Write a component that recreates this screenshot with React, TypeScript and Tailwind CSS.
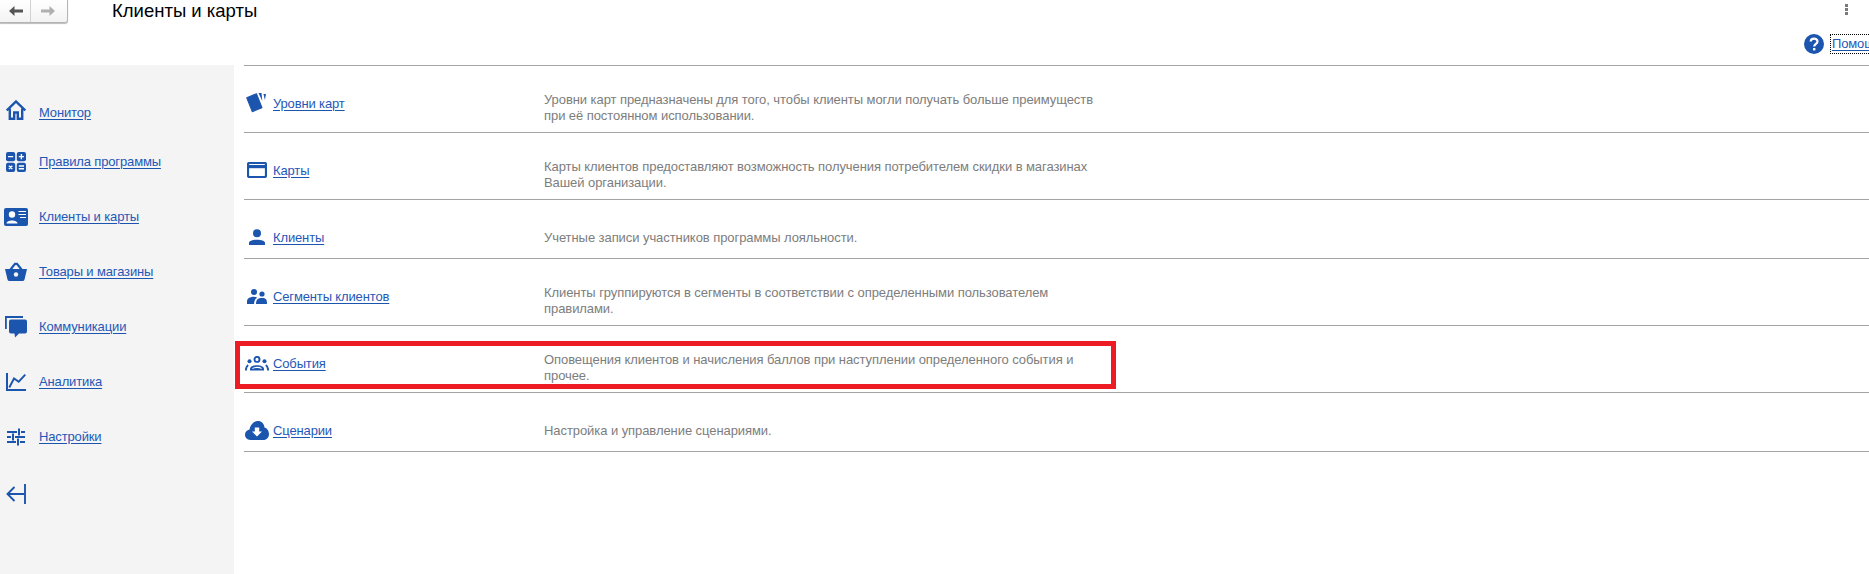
import React from "react";

const BLUE = "#1c55ae";

function Svg({ w, h, children }: { w: number; h: number; children: React.ReactNode }) {
  return (
    <svg width={w} height={h} viewBox={`0 0 ${w} ${h}`} fill="none" className="block shrink-0">
      {children}
    </svg>
  );
}

const IconHome = () => (
  <Svg w={20} h={20}>
    <path d="M0.8 10.5 L10 1.5 L19.2 10.5" stroke={BLUE} strokeWidth="2.4" />
    <path d="M3.8 8.5 V18.8 H8.2 V12.5 H11.8 V18.8 H16.2 V8.5" stroke={BLUE} strokeWidth="2.4" />
  </Svg>
);
const IconCalc = () => (
  <Svg w={20} h={20}>
    <rect x="0" y="0" width="9.2" height="9.2" rx="2" fill={BLUE} />
    <rect x="10.8" y="0" width="9.2" height="9.2" rx="2" fill={BLUE} />
    <rect x="0" y="10.8" width="9.2" height="9.2" rx="2" fill={BLUE} />
    <rect x="10.8" y="10.8" width="9.2" height="9.2" rx="2" fill={BLUE} />
    <path d="M2 4.6 H7.2 M12.8 4.6 H18 M15.4 2 V7.2 M2.9 13.7 L6.3 17.1 M6.3 13.7 L2.9 17.1 M12.8 14 H18 M12.8 16.8 H18" stroke="#fff" strokeWidth="1.4" />
  </Svg>
);
const IconContact = () => (
  <Svg w={24} h={18}>
    <rect width="24" height="18" rx="2" fill={BLUE} />
    <circle cx="8" cy="6.5" r="3.2" fill="#fff" />
    <path d="M2.5 15.5 C2.5 11.5 13.5 11.5 13.5 15.5 Z" fill="#fff" />
    <path d="M14.5 3.5 H22 M14.5 6.5 H22 M16 9.5 H22" stroke="#fff" strokeWidth="1.2" />
  </Svg>
);
const IconBasket = () => (
  <Svg w={22} h={19}>
    <path d="M5.5 7.5 L10 1.8 H12 L16.5 7.5" stroke={BLUE} strokeWidth="2.2" />
    <path d="M0 7 H22 L19.5 17.5 Q19.2 19 17.5 19 H4.5 Q2.8 19 2.5 17.5 Z" fill={BLUE} />
    <circle cx="11" cy="12.5" r="2.2" fill="#f4f4f4" />
  </Svg>
);
const IconComm = () => (
  <Svg w={22} h={22}>
    <path d="M.9 13 V1 H18" stroke={BLUE} strokeWidth="1.8" />
    <path d="M6 3.5 H20 Q22 3.5 22 5.5 V15.5 Q22 17.5 20 17.5 H14 L10 21.5 L9.5 17.5 H6 Q4 17.5 4 15.5 V5.5 Q4 3.5 6 3.5 Z" fill={BLUE} />
  </Svg>
);
const IconChart = () => (
  <Svg w={20} h={18}>
    <path d="M1 0 V17 H20" stroke={BLUE} strokeWidth="2" />
    <path d="M3.3 14.5 L8 5.5 L12.7 8.7 L19.3 1.7" stroke={BLUE} strokeWidth="1.9" />
  </Svg>
);
const IconSliders = () => (
  <Svg w={18} h={18}>
    <path d="M0 4 H10 M14 4 H18 M12 0.5 V7.5 M0 9 H4 M8 9 H18 M6 5.5 V12.5 M0 14 H9 M13 14 H18 M11 10.5 V17.5" stroke={BLUE} strokeWidth="2" />
  </Svg>
);
const IconCollapse = () => (
  <Svg w={20} h={20}>
    <path d="M19 0 V20 M1 10 H19 M8.5 3 L1.5 10 L8.5 17" stroke={BLUE} strokeWidth="1.9" />
  </Svg>
);
const IconCards = () => (
  <Svg w={21} h={20}>
    <path d="M0.8 4.8 L10.4 0.8 L15.9 14.6 L6.3 18.6 Z" fill={BLUE} stroke={BLUE} strokeWidth="1.2" strokeLinejoin="round" />
    <path d="M12.5 0 H15.5 L16.3 8 Z M17.5 1 H20 L18.9 7 Z" fill={BLUE} />
  </Svg>
);
const IconCard = () => (
  <Svg w={20} h={16}>
    <rect x="1" y="1" width="18" height="14" rx="1.5" stroke={BLUE} strokeWidth="2.2" />
    <rect x="1" y="3" width="18" height="3.2" fill={BLUE} />
  </Svg>
);
const IconPerson = () => (
  <Svg w={16} h={16}>
    <circle cx="8" cy="4.2" r="4" fill={BLUE} />
    <path d="M0 16 V14 C0 9.8 16 9.8 16 14 V16 Z" fill={BLUE} />
  </Svg>
);
const IconPeople = () => (
  <Svg w={20} h={15}>
    <circle cx="7" cy="3" r="3" fill={BLUE} />
    <circle cx="15" cy="5" r="2.6" fill={BLUE} />
    <path d="M0 15 V12.5 C0 9 3.5 8 7 7.8 C8.5 8 9.5 8.2 10 8.8 C8 10 7.5 11.5 7 15 Z" fill={BLUE} />
    <path d="M9 15 C9 10.5 11 9 15 9 C19 9 20 10.5 20 15 Z" fill={BLUE} />
  </Svg>
);
const IconGroup = () => (
  <Svg w={24} h={15}>
    <circle cx="12" cy="3.4" r="2.5" stroke={BLUE} strokeWidth="1.9" />
    <circle cx="4.5" cy="5.2" r="2" fill={BLUE} />
    <circle cx="19.5" cy="5.2" r="2" fill={BLUE} />
    <path d="M5 14.5 V13 C5 8 19 8 19 13 V14.5 Z" fill={BLUE} />
    <path d="M0.8 14.5 C1 11.5 1.6 10 3.2 9 M23.2 14.5 C23 11.5 22.4 10 20.8 9" stroke={BLUE} strokeWidth="1.9" />
    <path d="M7.5 12.6 C9 11 15 11 16.5 12.6" stroke="#fff" strokeWidth="1.1" />
  </Svg>
);
const IconCloud = () => (
  <Svg w={24} h={19}>
    <path d="M5.5 19 C2 19 0 16.5 0 13.8 C0 11 2 9 4.5 8.5 C5.5 3.5 9 0 13 0 C16.5 0 19 2.5 19.5 6.5 C22 7.2 24 9.8 24 13 C24 16.5 21.5 19 18.5 19 Z" fill={BLUE} />
    <path d="M9.8 6.5 H14.2 V10.5 H17 L12 15.5 L7 10.5 H9.8 Z" fill="#fff" />
  </Svg>
);

const sideItems = [
  { label: "Монитор", icon: <IconHome />, first: true },
  { label: "Правила программы", icon: <IconCalc /> },
  { label: "Клиенты и карты", icon: <IconContact /> },
  { label: "Товары и магазины", icon: <IconBasket /> },
  { label: "Коммуникации", icon: <IconComm /> },
  { label: "Аналитика", icon: <IconChart /> },
  { label: "Настройки", icon: <IconSliders /> },
];

const rows = [
  { label: "Уровни карт", icon: <IconCards />, lines: ["Уровни карт предназначены для того, чтобы клиенты могли получать больше преимуществ", "при её постоянном использовании."], tall: true },
  { label: "Карты", icon: <IconCard />, lines: ["Карты клиентов предоставляют возможность получения потребителем скидки в магазинах", "Вашей организации."], tall: true },
  { label: "Клиенты", icon: <IconPerson />, lines: ["Учетные записи участников программы лояльности."], tall: false },
  { label: "Сегменты клиентов", icon: <IconPeople />, lines: ["Клиенты группируются в сегменты в соответствии с определенными пользователем", "правилами."], tall: true },
  { label: "События", icon: <IconGroup />, lines: ["Оповещения клиентов и начисления баллов при наступлении определенного события и", "прочее."], tall: true, marked: true },
  { label: "Сценарии", icon: <IconCloud />, lines: ["Настройка и управление сценариями."], tall: false },
];

const Link = ({ children }: { children: React.ReactNode }) => (
  <a className="text-[#1f58b8] underline underline-offset-2 decoration-[#1c55ae] text-[13px] tracking-[-0.14px] leading-4 whitespace-nowrap cursor-pointer">{children}</a>
);

export default function App() {
  return (
    <div className="w-[1869px] h-[574px] overflow-hidden bg-white font-['Liberation_Sans',Arial,sans-serif] flex flex-col">
      <header className="h-[65px] shrink-0 flex flex-col">
        <div className="h-[24px] flex items-start">
          <div className="w-[68px] h-[23px] flex border border-t-0 border-l-0 border-[#b5b5b5] rounded-br-[3px] shadow-[0_1px_1px_#bbb] bg-gradient-to-b from-white to-[#f3f3f3]">
            <div className="w-[31px] border-r border-[#d2d2d2] flex items-center justify-center pl-[2px]">
              <svg width="14" height="10" viewBox="0 0 14 10"><path d="M5.5 0 L0 5 L5.5 10 V6.5 H14 V3.5 H5.5 Z" fill="#555" /></svg>
            </div>
            <div className="flex-1 flex items-center justify-center pr-[2px]">
              <svg width="14" height="10" viewBox="0 0 14 10"><path d="M8.5 0 L14 5 L8.5 10 V6.5 H0 V3.5 H8.5 Z" fill="#b0b0b0" /></svg>
            </div>
          </div>
          <h1 className="ml-[44px] text-[18.5px] leading-[21px] text-black font-normal whitespace-nowrap">Клиенты и карты</h1>
          <div className="ml-auto mr-[21px] mt-[4px] flex flex-col gap-[1px]">
            <span className="w-[3px] h-[3px] bg-[#7a7a7a]" />
            <span className="w-[3px] h-[3px] bg-[#7a7a7a]" />
            <span className="w-[3px] h-[3px] bg-[#7a7a7a]" />
          </div>
        </div>
        <div className="mt-[10px] pl-[1804px] flex items-center gap-[7px] whitespace-nowrap">
          <svg width="20" height="20" viewBox="0 0 20 20" className="shrink-0">
            <circle cx="10" cy="10" r="10" fill={BLUE} />
            <path d="M6.7 7.6 C6.7 3.6 13.5 3.6 13.5 7.6 C13.5 10 10.2 10 10.2 12.6" stroke="#fff" strokeWidth="2.2" fill="none" />
            <rect x="9" y="14" width="2.4" height="2.4" fill="#fff" />
          </svg>
          <div className="h-[18px] pl-[1px] pr-[1px] outline-1 outline-dotted outline-black flex items-center">
            <Link>Помощь</Link>
          </div>
        </div>
      </header>
      <div className="flex-1 flex min-h-0">
        <aside className="w-[234px] shrink-0 bg-[#f4f4f4] pt-[20px] flex flex-col">
          {sideItems.map((it) => (
            <div key={it.label} className={it.first ? "h-[49px] flex items-center" : "h-[55px] flex items-center"}>
              <div className="w-[32px] flex justify-center">{it.icon}</div>
              <div className={it.first ? "ml-[7px] pt-[5px]" : "ml-[7px] pb-[2px]"}>
                <Link>{it.label}</Link>
              </div>
            </div>
          ))}
          <div className="mt-[20px] w-[32px] flex justify-center">
            <IconCollapse />
          </div>
        </aside>
        <main className="flex-1 pl-[10px]">
          <div className="border-t border-[#a3a3a3]">
            {rows.map((r) => (
              <div key={r.label} className={`${r.tall ? "h-[67px]" : "h-[59px]"} relative border-b border-[#a3a3a3] pt-[17px] flex items-center`}>
                <div className="w-[300px] self-start mt-[12px] flex items-center h-[18px]">
                  <div className="w-[29px] flex justify-center pr-[4px] pb-[2px]">{r.icon}</div>
                  <Link>{r.label}</Link>
                </div>
                <p className="text-[13px] tracking-[-0.07px] leading-4 text-[#7d7d7d] whitespace-nowrap">
                  {r.lines.map((l) => (
                    <span key={l} className="block">{l}</span>
                  ))}
                </p>
                {r.marked && (
                  <div className="absolute left-[-9px] top-[15px] w-[881px] h-[48px] border-[5px] border-[#ed1c24]" />
                )}
              </div>
            ))}
          </div>
        </main>
      </div>
    </div>
  );
}
